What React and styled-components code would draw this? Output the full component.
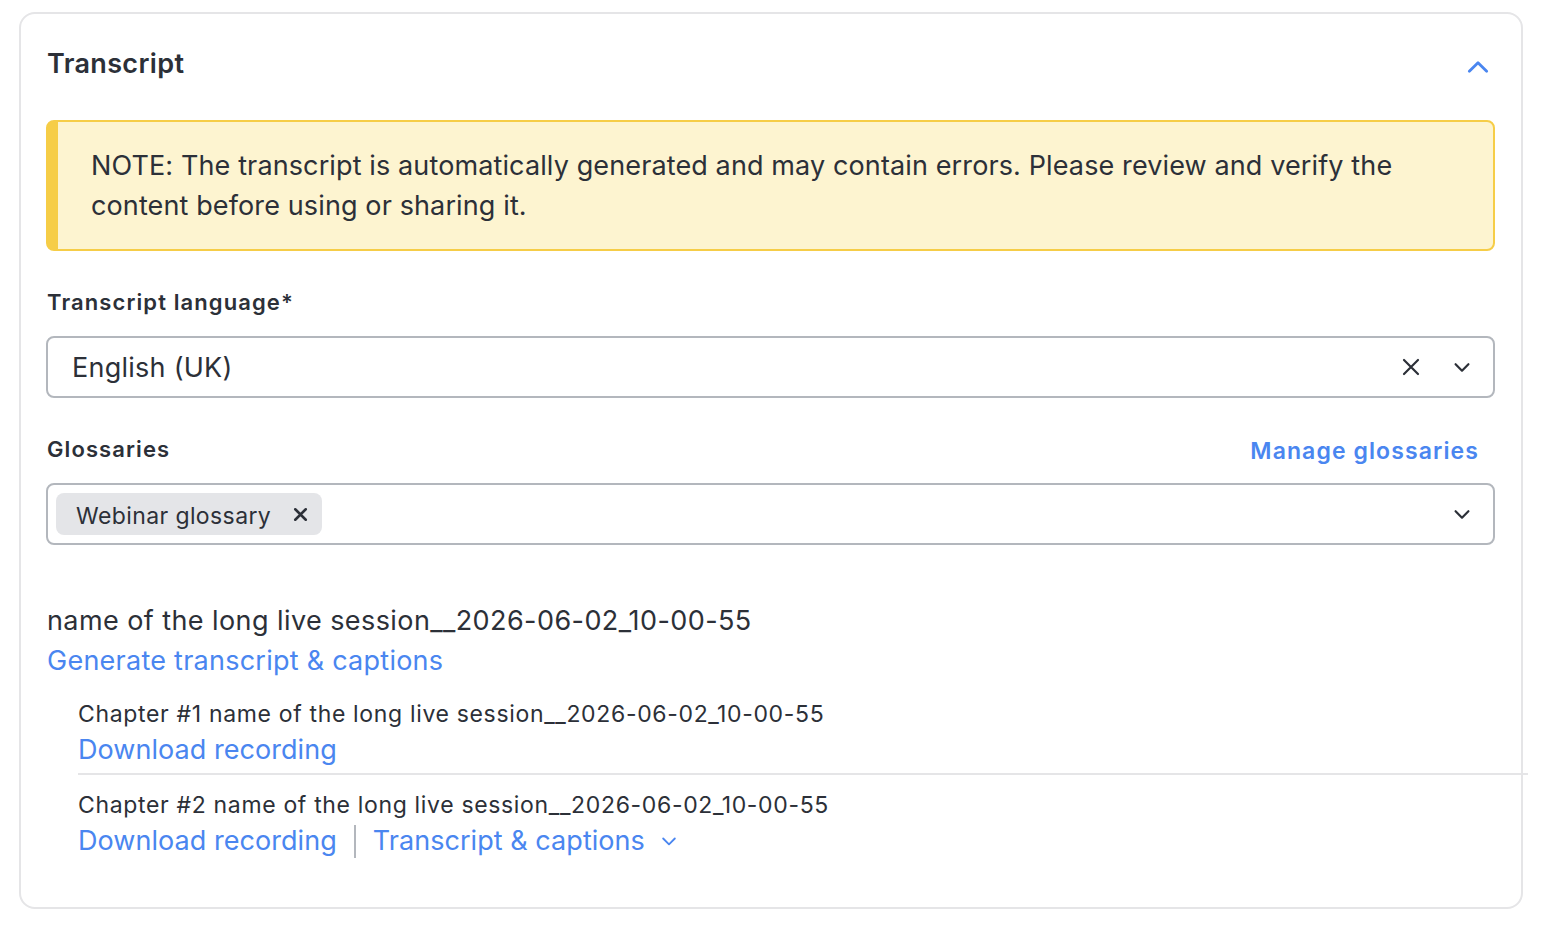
import React from 'react'
import styled, { createGlobalStyle } from 'styled-components'

const GlobalStyle = createGlobalStyle`
  body {
    margin: 0;
    background: #fff;
    font-family: Inter, "Noto Sans", sans-serif;
    color: #2c3038;
  }
`

const Card = styled.section`
  margin: 12px 0 0 19px;
  width: 1504px;
  box-sizing: border-box;
  border: 2px solid #e5e5e7;
  border-radius: 16px;
  padding: 0 26px 44px 25px;
`

const Header = styled.div`
  display: flex;
  align-items: center;
  justify-content: space-between;
  height: 100px;
  padding-bottom: 6px;
`

const Title = styled.h2`
  margin: 0;
  font-size: 27px;
  font-weight: 600;
  line-height: 36px;
  letter-spacing: 0.35px;
  padding-left: 1px;
`

const IconButton = styled.button`
  border: 0;
  background: none;
  padding: 0;
  margin: 6px 4px 0 0;
  display: flex;
  color: ${p => p.color || '#2c3038'};
  cursor: pointer;
`

const Notice = styled.div`
  box-sizing: border-box;
  height: 131px;
  background: #fdf4d0;
  border: 2px solid #f6cd47;
  border-left-width: 12px;
  border-radius: 8px;
  padding: 24px 30px 0 33px;
  font-size: 27px;
  letter-spacing: 0.12px;
  line-height: 40px;
  color: #2c3038;
`

const LabelRow = styled.div`
  display: flex;
  justify-content: space-between;
  align-items: center;
  margin-top: 36px;
  height: 30px;
`

const Label = styled.label`
  font-size: 22px;
  font-weight: 600;
  letter-spacing: 1.1px;
  padding-left: 1px;
`

const ManageLink = styled.a`
  font-size: 23px;
  font-weight: 600;
  letter-spacing: 1.1px;
  color: #4a86f0;
  margin-right: 16px;
  margin-top: 3px;
`

const Select = styled.div`
  box-sizing: border-box;
  height: 62px;
  margin-top: 19px;
  border: 2px solid #b3b7bd;
  border-radius: 8px;
  display: flex;
  align-items: center;
  padding: 0 20px 0 ${p => p.$chips ? '8px' : '24px'};
`

const Value = styled.div`
  flex: 1;
  font-size: 27px;
  letter-spacing: 0.25px;
  color: #2c3038;
`

const Indicators = styled.div`
  display: flex;
  align-items: center;
  gap: 30px;
`

const Chip = styled.div`
  display: flex;
  align-items: center;
  gap: 22px;
  height: 42px;
  padding: 3px 14px 0 20px;
  box-sizing: border-box;
  background: #e4e5e8;
  border-radius: 8px;
  font-size: 23px;
  letter-spacing: 0.4px;
  color: #2c3038;

  svg {
    margin-top: -2px;
  }
`

const ChipList = styled.div`
  flex: 1;
  display: flex;
`

const Session = styled.div`
  margin-top: 56px;
  padding-left: 1px;
`

const SessionName = styled.div`
  font-size: 27px;
  line-height: 40px;
  letter-spacing: 0.42px;
`

const LinkText = styled.a`
  display: inline-flex;
  align-items: center;
  gap: 14px;
  font-size: 27px;
  letter-spacing: ${p => p.$tight ? '0.05px' : '0.25px'};
  line-height: 40px;
  color: #4a86f0;
  cursor: pointer;
`

const Chapters = styled.div`
  margin: 17px -33px 0 31px;
`

const Chapter = styled.div`
  padding: ${p => p.$first ? '0' : '14px'} 0 ${p => p.$first ? '3px' : '2px'};
  border-bottom: ${p => p.$last ? '0' : '2px solid #e5e5e7'};
`

const ChapterName = styled.div`
  font-size: 23px;
  line-height: 32px;
  letter-spacing: 0.66px;
`

const Actions = styled.div`
  display: flex;
  align-items: center;
`

const Divider = styled.span`
  width: 2px;
  height: 33px;
  background: #b3b7bd;
  margin: 0 17px;
`

const Chevron = ({ up, size = 22, stroke = 2.4 }) => (
  <svg width={size} height={size} viewBox="0 0 24 24" fill="none" stroke="currentColor" strokeWidth={stroke} strokeLinecap="round" strokeLinejoin="round">
    <path d={up ? 'M4 16l8-8 8 8' : 'M5 9l7 7 7-7'} />
  </svg>
)

const Cross = ({ size = 20, stroke = 2 }) => (
  <svg width={size} height={size} viewBox="0 0 20 20" fill="none" stroke="currentColor" strokeWidth={stroke} strokeLinecap="round">
    <path d="M3 3l14 14M17 3L3 17" />
  </svg>
)

export default function App() {
  return (
    <>
      <GlobalStyle />
      <Card>
        <Header>
          <Title>Transcript</Title>
          <IconButton color="#4a86f0"><Chevron up size={26} stroke={2.6} /></IconButton>
        </Header>

        <Notice>
          NOTE: The transcript is automatically generated and may contain errors. Please review and verify the content before using or sharing it.
        </Notice>

        <LabelRow>
          <Label>Transcript language*</Label>
        </LabelRow>
        <Select>
          <Value>English (UK)</Value>
          <Indicators>
            <Cross size={20} stroke={2.2} />
            <Chevron size={22} stroke={2.4} />
          </Indicators>
        </Select>

        <LabelRow>
          <Label>Glossaries</Label>
          <ManageLink>Manage glossaries</ManageLink>
        </LabelRow>
        <Select $chips>
          <ChipList>
            <Chip>
              Webinar glossary
              <Cross size={15} stroke={3.4} />
            </Chip>
          </ChipList>
          <Chevron size={22} stroke={2.4} />
        </Select>

        <Session>
          <SessionName>name of the long live session__2026-06-02_10-00-55</SessionName>
          <LinkText>Generate transcript &amp; captions</LinkText>
          <Chapters>
            <Chapter $first>
              <ChapterName>Chapter #1 name of the long live session__2026-06-02_10-00-55</ChapterName>
              <LinkText $tight>Download recording</LinkText>
            </Chapter>
            <Chapter $last>
              <ChapterName>Chapter #2 name of the long live session__2026-06-02_10-00-55</ChapterName>
              <Actions>
                <LinkText $tight>Download recording</LinkText>
                <Divider />
                <LinkText $tight>
                  Transcript &amp; captions
                  <Chevron size={20} stroke={2.2} />
                </LinkText>
              </Actions>
            </Chapter>
          </Chapters>
        </Session>
      </Card>
    </>
  )
}
